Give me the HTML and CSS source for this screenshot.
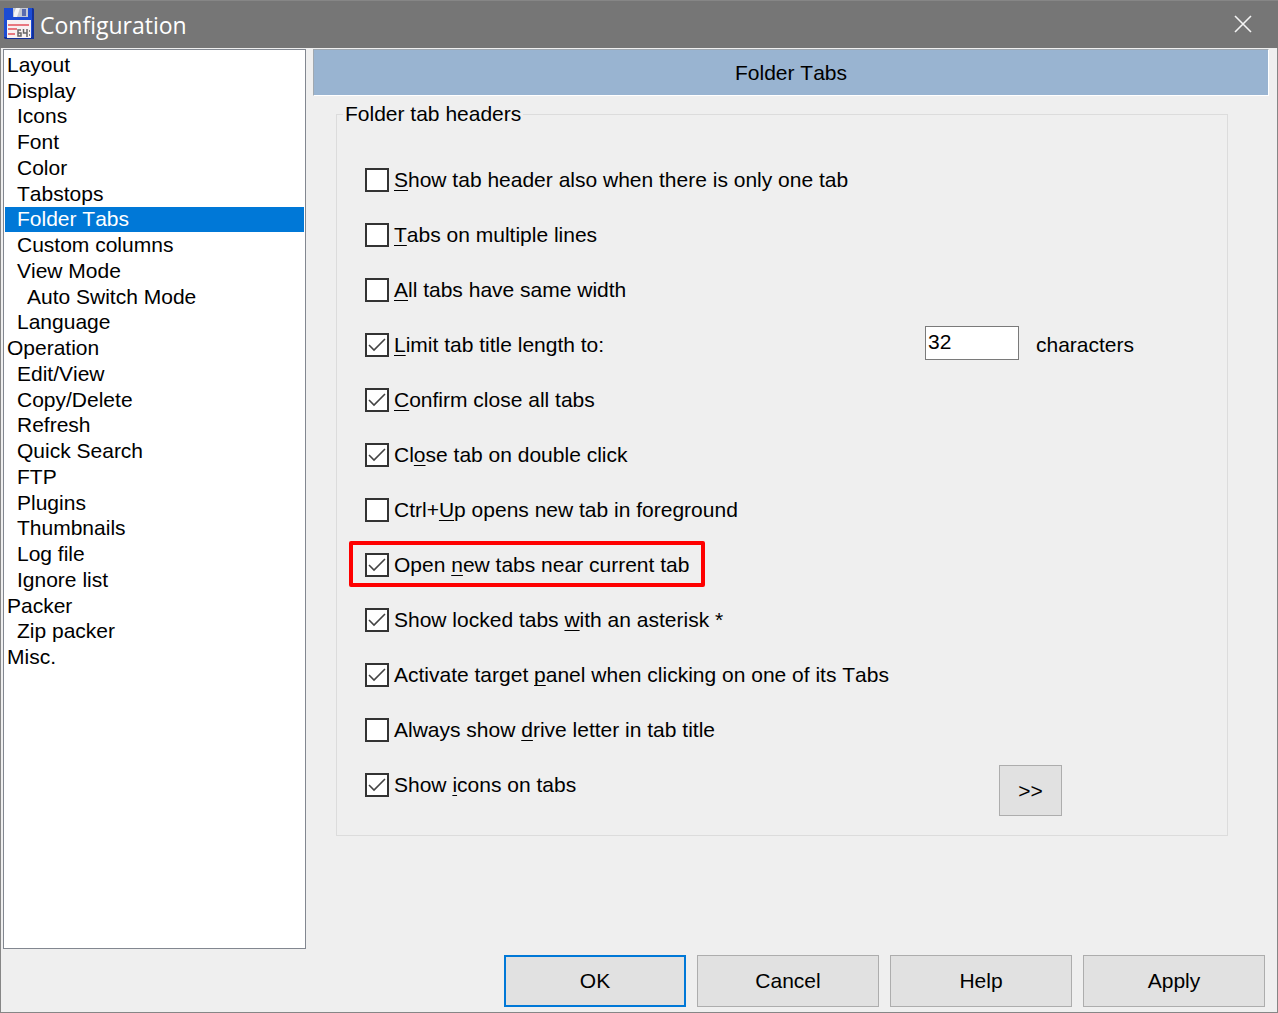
FILE: index.html
```html
<!DOCTYPE html>
<html lang="en">
<head>
<meta charset="utf-8">
<title>Configuration</title>
<link rel="stylesheet" href="styles.css">
</head>
<body>
<form class="window">
  <header class="titlebar">
    <svg class="app-icon" viewBox="0 0 32 32" aria-hidden="true">
      <path fill="#12309a" d="M1 0h29l1 1v30H2l-1-1z"/>
      <path fill="#1c4cd4" d="M1 0h28v29H1z"/>
      <path fill="#c4c8d2" d="M10 0h15v9H10z"/>
      <path fill="#f4f4f6" d="M13 0h4l-3 9h-3V5z"/>
      <path fill="#5a6cae" d="M19 1h4v7h-4z"/>
      <path fill="#f8f2f2" d="M4 12h24v18H4z"/>
      <path fill="#e87880" d="M5 16h21v2H5zM5 20h9v2H5zM5 25h7v2H5z"/>
      <path fill="none" stroke="#666" stroke-width="1.5" d="M18 22h-3v6h3v-3h-3M20.500 21v4h3.500M24 21v8"/>
      <path fill="#888" d="M26 22h1v2h-1zM26 26h1v2h-1z"/>
    </svg>
    <h1 class="title">Configuration</h1>
    <button class="close" type="button" aria-label="Close">
      <svg viewBox="0 0 18 18" aria-hidden="true"><path d="M1 1l16 16M17 1L1 17"/></svg>
    </button>
  </header>

  <div class="body">
    <nav class="sidebar" aria-label="Pages">
      <ul class="pages">
        <li><a href="#">Layout</a></li>
        <li><a href="#">Display</a></li>
        <li class="level-1"><a href="#">Icons</a></li>
        <li class="level-1"><a href="#">Font</a></li>
        <li class="level-1"><a href="#">Color</a></li>
        <li class="level-1"><a href="#">Tabstops</a></li>
        <li class="level-1 selected"><a href="#" aria-current="page">Folder Tabs</a></li>
        <li class="level-1"><a href="#">Custom columns</a></li>
        <li class="level-1"><a href="#">View Mode</a></li>
        <li class="level-2"><a href="#">Auto Switch Mode</a></li>
        <li class="level-1"><a href="#">Language</a></li>
        <li><a href="#">Operation</a></li>
        <li class="level-1"><a href="#">Edit/View</a></li>
        <li class="level-1"><a href="#">Copy/Delete</a></li>
        <li class="level-1"><a href="#">Refresh</a></li>
        <li class="level-1"><a href="#">Quick Search</a></li>
        <li class="level-1"><a href="#">FTP</a></li>
        <li class="level-1"><a href="#">Plugins</a></li>
        <li class="level-1"><a href="#">Thumbnails</a></li>
        <li class="level-1"><a href="#">Log file</a></li>
        <li class="level-1"><a href="#">Ignore list</a></li>
        <li><a href="#">Packer</a></li>
        <li class="level-1"><a href="#">Zip packer</a></li>
        <li><a href="#">Misc.</a></li>
      </ul>
    </nav>

    <main class="content">
      <h2 class="page-title">Folder Tabs</h2>
      <fieldset class="group">
        <legend>Folder tab headers</legend>
        <div class="row"><label class="option"><input type="checkbox"><span><u>S</u>how tab header also when there is only one tab</span></label></div>
        <div class="row"><label class="option"><input type="checkbox"><span><u>T</u>abs on multiple lines</span></label></div>
        <div class="row"><label class="option"><input type="checkbox"><span><u>A</u>ll tabs have same width</span></label></div>
        <div class="row">
          <label class="option"><input type="checkbox" checked><span><u>L</u>imit tab title length to:</span></label>
          <div class="limit">
            <input class="number" id="limit" type="text" value="32">
            <label for="limit">characters</label>
          </div>
        </div>
        <div class="row"><label class="option"><input type="checkbox" checked><span><u>C</u>onfirm close all tabs</span></label></div>
        <div class="row"><label class="option"><input type="checkbox" checked><span>Cl<u>o</u>se tab on double click</span></label></div>
        <div class="row"><label class="option"><input type="checkbox"><span>Ctrl+<u>U</u>p opens new tab in foreground</span></label></div>
        <div class="row"><label class="option highlighted"><input type="checkbox" checked><span>Open <u>n</u>ew tabs near current tab</span></label></div>
        <div class="row"><label class="option"><input type="checkbox" checked><span>Show locked tabs <u>w</u>ith an asterisk *</span></label></div>
        <div class="row"><label class="option"><input type="checkbox" checked><span>Activate target <u>p</u>anel when clicking on one of its Tabs</span></label></div>
        <div class="row"><label class="option"><input type="checkbox"><span>Always show <u>d</u>rive letter in tab title</span></label></div>
        <div class="row">
          <label class="option"><input type="checkbox" checked><span>Show <u>i</u>cons on tabs</span></label>
          <button class="button more" type="button">&gt;&gt;</button>
        </div>
      </fieldset>
    </main>
  </div>

  <footer class="actions">
    <button class="button default" type="submit">OK</button>
    <button class="button" type="button">Cancel</button>
    <button class="button" type="button">Help</button>
    <button class="button" type="button">Apply</button>
  </footer>
</form>
</body>
</html>
```
FILE: styles.css
```css
* {
  box-sizing: border-box;
}

body {
  margin: 0;
  background: #efefef;
  color: #000;
  font: 21px/24px "Liberation Sans", Arial, sans-serif;
  font-kerning: none;
}

button,
input {
  font: inherit;
  font-kerning: none;
  color: inherit;
}

.window {
  display: flex;
  flex-direction: column;
  min-height: 100vh;
  border: 1px solid #868686;
  border-top: 0;
}

/* Title bar */
.titlebar {
  display: flex;
  align-items: center;
  height: 48px;
  margin: 0 -1px;
  padding: 0 26px 1px 3px;
  background: #767676;
  border-top: 1px solid #868686;
  color: #fff;
}

.app-icon {
  width: 32px;
  height: 32px;
}

.title {
  flex: 1;
  margin: 0 0 0 5px;
  padding-top: 1px;
  font: 23px/32px "Open Sans", "Noto Sans", sans-serif;
}

.close {
  display: flex;
  padding: 0;
  border: 0;
  background: none;
}

.close svg {
  width: 18px;
  height: 18px;
  fill: none;
  stroke: #f4f4f4;
  stroke-width: 1.6;
}

/* Page list */
.body {
  display: flex;
  flex: 1;
  gap: 7px;
  padding: 1px 8px 6px 2px;
}

.sidebar {
  flex: 0 0 303px;
  padding: 2px 1px;
  background: #fff;
  border: 1px solid #828790;
}

.pages {
  display: grid;
  min-height: 618px;
  margin: 0;
  padding: 0;
  list-style: none;
}

.pages li {
  display: grid;
  align-items: center;
  padding-left: 2px;
}

.pages .level-1 {
  padding-left: 12px;
}

.pages .level-2 {
  padding-left: 22px;
}

.pages .selected {
  background: #0078d7;
  color: #fff;
}

.pages a {
  color: inherit;
  text-decoration: none;
}

/* Settings page */
.content {
  flex: 1;
}

.page-title {
  margin: 0;
  padding: 11px 0 10px;
  background: #99b4d1;
  border: 1px solid #a0a8b0;
  border-right-color: #fff;
  border-bottom-color: #fff;
  font: inherit;
  font-kerning: none;
  text-align: center;
}

.group {
  margin: 6px 41px 0 23px;
  padding: 26px 0 19px 28px;
  border: 1px solid #dcdcdc;
}

.group legend {
  margin-left: -22px;
  padding: 0 2px;
}

.row {
  display: flex;
  justify-content: space-between;
  align-items: flex-start;
}

.option {
  position: relative;
  display: flex;
  align-items: center;
  gap: 5px;
  min-height: 55px;
}

.option u {
  text-decoration-thickness: 1px;
  text-underline-offset: 3px;
  text-decoration-skip-ink: none;
}

.option input {
  appearance: none;
  flex: none;
  width: 24px;
  height: 24px;
  margin: 0;
  background: #fff;
  border: 2px solid #333;
}

.option input:checked {
  background: #fff url("data:image/svg+xml,%3Csvg xmlns='http://www.w3.org/2000/svg' viewBox='0 0 20 20'%3E%3Cpath d='M2 10l5 5L18 4' fill='none' stroke='%23444' stroke-width='1.6'/%3E%3C/svg%3E") center / 20px 20px no-repeat;
}

.highlighted::after {
  content: "";
  position: absolute;
  inset: 4px -16px 5px;
  border: 4px solid #fe0000;
  border-radius: 2px;
}

.limit {
  display: flex;
  align-items: center;
  gap: 17px;
  min-height: 55px;
  margin-right: 93px;
}

.number {
  width: 94px;
  height: 34px;
  margin-bottom: 4px;
  padding: 0 2px 2px;
  background: #fff;
  border: 1px solid #7a7a7a;
}

/* Buttons */
.button {
  width: 182px;
  height: 52px;
  padding: 0;
  background: #e1e1e1;
  border: 1px solid #adadad;
}

.button.default {
  border: 2px solid #0078d7;
}

.button.more {
  width: 63px;
  height: 51px;
  margin: 8px 165px 0 0;
}

.actions {
  display: flex;
  justify-content: flex-end;
  gap: 11px;
  padding: 0 12px 5px;
}
```
